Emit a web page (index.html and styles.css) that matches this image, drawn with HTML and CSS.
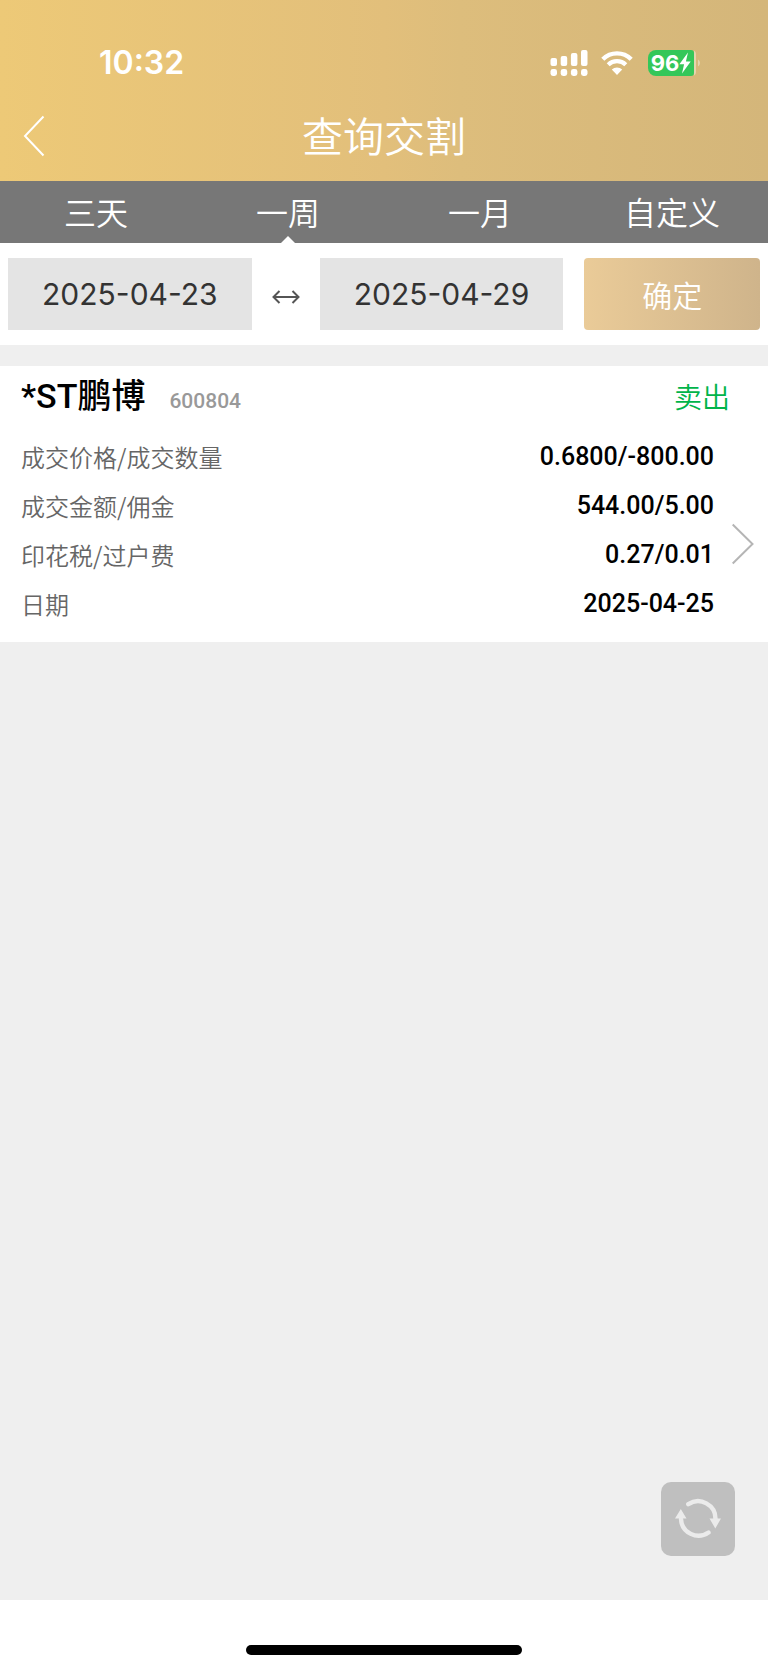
FILE: index.html
```html
<!DOCTYPE html>
<html lang="zh-CN">
<head>
<meta charset="utf-8">
<meta name="viewport" content="width=device-width, initial-scale=1">
<title>查询交割</title>
<link rel="stylesheet" href="styles.css">
</head>
<body>
<div class="page">
  <header class="header">
    <div class="status">
      <time class="clock">10:32</time>
      <div class="indicators">
        <svg class="signal" width="38" height="28" viewBox="0 0 38 28" fill="#fff" aria-hidden="true">
          <rect x="0.5" y="9" width="6.5" height="8" rx="2"/>
          <rect x="10.7" y="7" width="6.5" height="10" rx="2"/>
          <rect x="20.9" y="4" width="6.5" height="13" rx="2"/>
          <rect x="31" y="1" width="6.5" height="16" rx="2"/>
          <rect x="0.5" y="20" width="6.5" height="7" rx="2.4"/>
          <rect x="10.7" y="20" width="6.5" height="7" rx="2.4"/>
          <rect x="20.9" y="20" width="6.5" height="7" rx="2.4"/>
          <rect x="31" y="20" width="6.5" height="7" rx="2.4"/>
        </svg>
        <svg class="wifi" width="34" height="28" viewBox="0 0 34 28" fill="none" aria-hidden="true">
          <path d="M2.8 10.2a20.2 20.2 0 0 1 28.4 0" stroke="#fff" stroke-width="4.4"/>
          <path d="M8.2 15.8a12.6 12.6 0 0 1 17.6 0" stroke="#fff" stroke-width="4.2"/>
          <path d="M11.8 20.6a7.4 7.4 0 0 1 10.4 0L17 26z" fill="#fff"/>
        </svg>
        <div class="battery">
          <span class="level">96</span>
          <svg width="12" height="22" viewBox="0 0 12 22" fill="#fff" aria-hidden="true">
            <path d="M9 0.5 0.4 12.2h4.7L3 21.5l8.7-11.9H6.9z"/>
          </svg>
        </div>
        <svg class="nub" width="6" height="28" viewBox="0 0 6 28" fill="#fff" fill-opacity=".4" aria-hidden="true">
          <path d="M0 1.5c1.4.8 2 2 2 4v17c0 2-.6 3.200-2 4z"/>
          <path d="M4 10.500c2.600 1.500 2.600 5.500 0 7z"/>
        </svg>
      </div>
    </div>
    <div class="titlebar">
      <button class="back" type="button" aria-label="返回">
        <svg width="22" height="42" viewBox="0 0 22 42" fill="none" stroke="#fff" stroke-width="2" aria-hidden="true">
          <path d="M20.500 1.500 2 21l18.500 19.500"/>
        </svg>
      </button>
      <h1 class="title">查询交割</h1>
    </div>
  </header>

  <nav class="tabs">
    <button class="tab" type="button">三天</button>
    <button class="tab tab-active" type="button" aria-current="true">一周</button>
    <button class="tab" type="button">一月</button>
    <button class="tab" type="button">自定义</button>
  </nav>

  <form class="filter">
    <input class="date" type="text" aria-label="开始日期" value="2025-04-23" readonly>
    <svg class="range" width="28" height="14" viewBox="0 0 28 14" fill="none" stroke="#555" stroke-width="2" aria-hidden="true">
      <path d="M2 7h24M7.500 1 1.500 7l6 6M20.500 1l6 6-6 6"/>
    </svg>
    <input class="date" type="text" aria-label="结束日期" value="2025-04-29" readonly>
    <button class="confirm" type="button">确定</button>
  </form>

  <main class="content">
    <article class="trade">
      <div class="trade-head">
        <h2 class="name">*ST鹏博</h2>
        <span class="code">600804</span>
        <span class="side">卖出</span>
      </div>
      <div class="trade-body">
        <dl class="rows">
          <div class="row"><dt>成交价格/成交数量</dt><dd>0.6800/-800.00</dd></div>
          <div class="row"><dt>成交金额/佣金</dt><dd>544.00/5.00</dd></div>
          <div class="row"><dt>印花税/过户费</dt><dd>0.27/0.01</dd></div>
          <div class="row"><dt>日期</dt><dd>2025-04-25</dd></div>
        </dl>
        <button class="detail" type="button" aria-label="详情">
          <svg width="22" height="42" viewBox="0 0 22 42" fill="none" stroke="#b5b5b5" stroke-width="2" aria-hidden="true">
            <path d="M0.700 1.500 20.500 21 0.700 40.500"/>
          </svg>
        </button>
      </div>
    </article>
    <button class="refresh" type="button" aria-label="刷新">
      <svg width="46" height="42" viewBox="0 0 46 42" fill="none" aria-hidden="true">
        <g stroke="#ebebeb" stroke-width="4.400" stroke-linecap="round">
          <path d="M13.300 6.200A17.500 17.500 0 0 1 40.500 21"/>
          <path d="M33.500 34.500A17.500 17.500 0 0 1 6 21"/>
        </g>
        <path d="M34.500 20.500h11.500l-5.700 10zM0 20.500h11.500L5.800 11z" fill="#ebebeb"/>
      </svg>
    </button>
  </main>

  <footer class="home"><div class="home-bar"></div></footer>
</div>
</body>
</html>
```
FILE: styles.css
```css
* {
  box-sizing: border-box;
}

body {
  margin: 0;
  background: #fff;
  font-family: "Noto Sans CJK SC", sans-serif;
}

button,
input {
  margin: 0;
  padding: 0;
  border: 0;
  border-radius: 0;
  background: none;
  font: inherit;
  color: inherit;
}

svg {
  display: block;
}

h1,
h2,
dl,
dd {
  margin: 0;
  font-weight: inherit;
}

.page {
  display: flex;
  flex-direction: column;
  min-height: 100vh;
}

.header {
  padding-top: 38px;
  background: linear-gradient(90deg, #edc977, #e2bf7b 50%, #ddbd7c 60%, #d4b67a);
  color: #fff;
}

.status {
  display: flex;
  align-items: center;
  justify-content: space-between;
  height: 49px;
  padding: 0 68px 0 99px;
}

.clock {
  font: 600 32px/49px Inter, sans-serif;
}

.indicators {
  display: flex;
  align-items: center;
}

.wifi {
  margin: 0 14px 0 12px;
}

.battery {
  display: flex;
  align-items: center;
  justify-content: center;
  width: 46px;
  height: 26px;
  border-radius: 8px 3px 3px 8px;
  background: #34c759;
}

.level {
  font: 700 22px/26px Inter, sans-serif;
}

.titlebar {
  display: grid;
  grid-template-columns: 64px 1fr 64px;
  align-items: center;
  height: 94px;
}

.back {
  padding: 3px 0 0 23px;
}

.title {
  font-size: 41px;
  line-height: 60px;
  font-weight: 350;
  text-align: center;
}

.tabs {
  display: grid;
  grid-template-columns: repeat(4, 1fr);
  background: #777;
  color: #fff;
}

.tab {
  position: relative;
  height: 62px;
  padding-bottom: 2px;
  font-size: 32px;
  line-height: 60px;
  font-weight: 350;
}

.tab-active::after {
  content: "";
  position: absolute;
  left: calc(50% - 7px);
  bottom: 0;
  border: 7px solid transparent;
  border-top: 0;
  border-bottom-color: #fff;
}

.filter {
  display: grid;
  grid-template-columns: 244fr 68px 244fr 197fr;
  align-items: center;
  padding: 15px 8px;
}

.date {
  width: 100%;
  height: 72px;
  background: #e4e4e4;
  color: #333;
  font: 400 30px/72px Inter, sans-serif;
  text-align: center;
}

.range {
  justify-self: center;
  margin-top: 6px;
}

.confirm {
  height: 72px;
  margin-left: 21px;
  border-radius: 4px;
  background: linear-gradient(90deg, #eacb98, #cfb48b);
  color: #fff;
  font-size: 30px;
  font-weight: 350;
}

.content {
  display: flex;
  flex: 1;
  flex-direction: column;
  padding: 21px 0 44px;
  background: #efefef;
}

.trade {
  padding-bottom: 14px;
  background: #fff;
}

.trade-head {
  display: flex;
  align-items: baseline;
  height: 66px;
  padding: 0 38px 0 21px;
}

.name {
  color: #000;
  font: 500 34px/60px Roboto, "Noto Sans CJK SC", sans-serif;
}

.code {
  margin-left: 24px;
  color: #999;
  font: 500 21px/40px Roboto, sans-serif;
}

.side {
  align-self: flex-start;
  margin-left: auto;
  color: #00b44a;
  font-size: 28px;
  line-height: 60px;
  font-weight: 350;
}

.trade-body {
  display: flex;
  align-items: center;
  padding: 0 14px 0 21px;
}

.rows {
  flex: 1;
}

.row {
  display: flex;
  align-items: center;
  justify-content: space-between;
  height: 49px;
}

.row dt {
  color: #666;
  font-size: 24px;
  line-height: 47px;
  font-weight: 350;
}

.row dd {
  color: #000;
  font: 500 25px/49px Roboto, sans-serif;
}

.detail {
  margin: 28px 0 0 18px;
}

.refresh {
  display: flex;
  align-items: center;
  justify-content: center;
  align-self: flex-end;
  width: 74px;
  height: 74px;
  margin: auto 33px 0 0;
  border-radius: 10px;
  background: #bfbfbf;
}

.home {
  display: flex;
  align-items: flex-end;
  justify-content: center;
  height: 70px;
  padding-bottom: 15px;
  background: #fff;
}

.home-bar {
  width: 36%;
  height: 10px;
  border-radius: 5px;
  background: #000;
}
```
